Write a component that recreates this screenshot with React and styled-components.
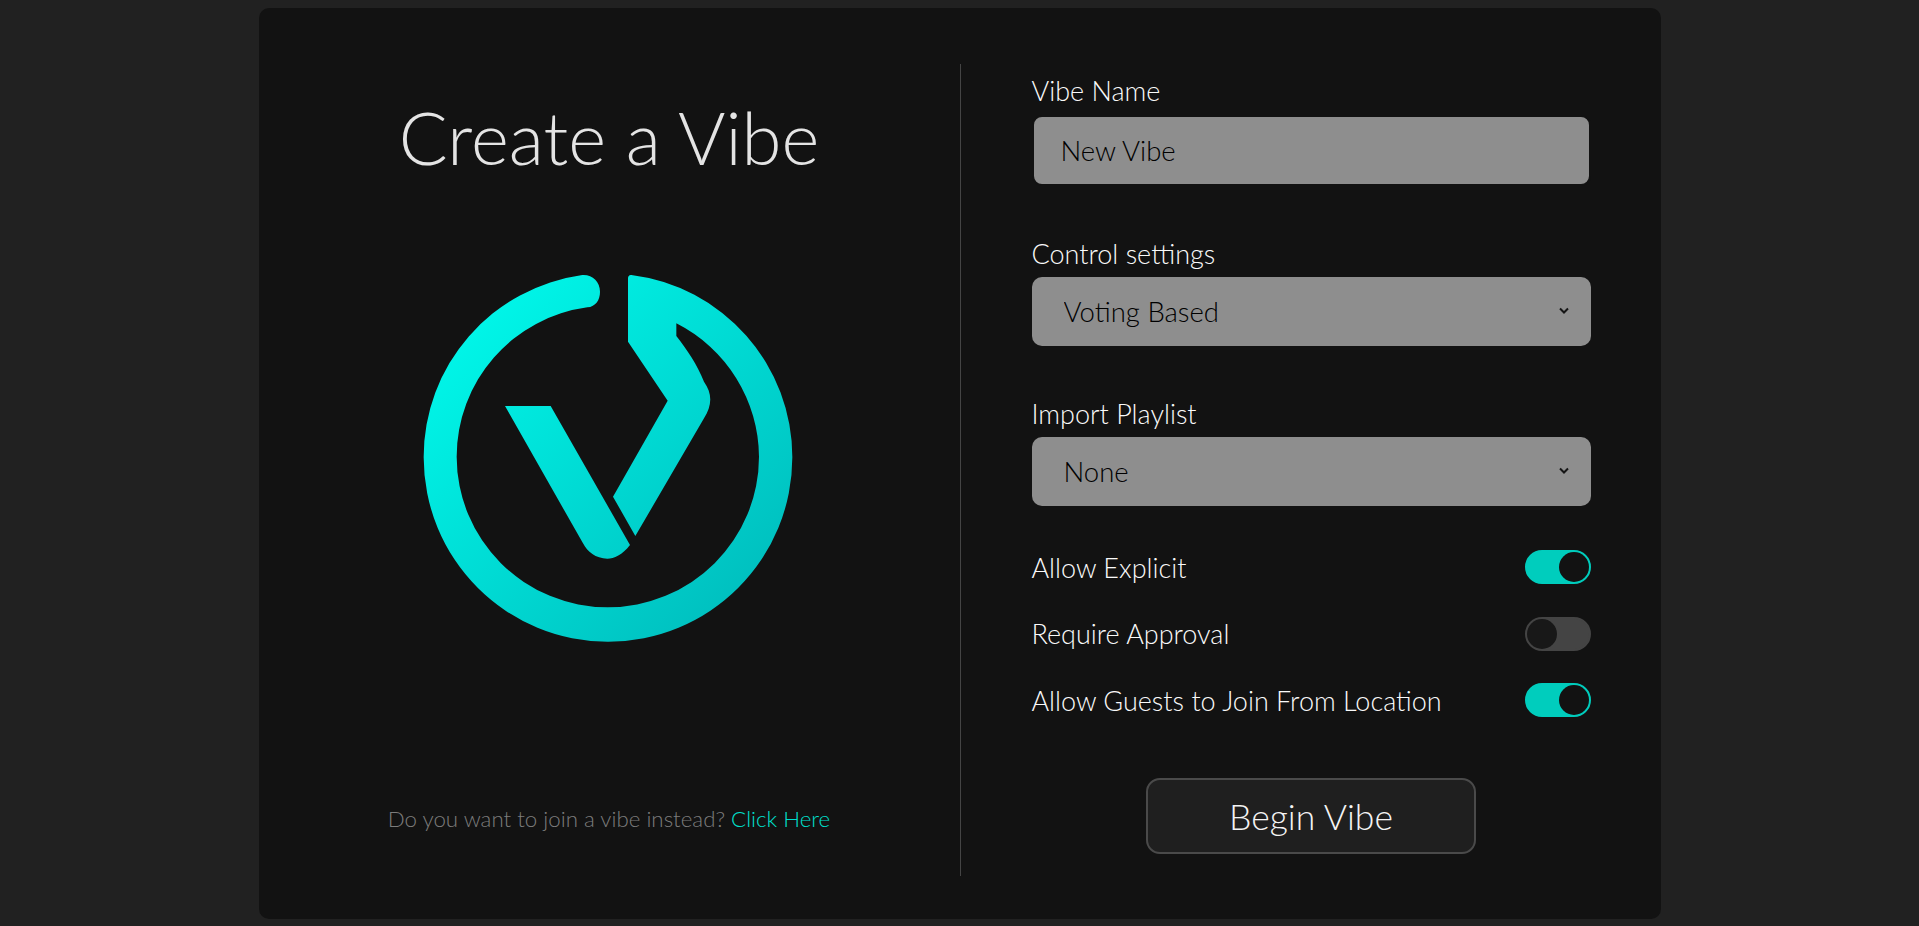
import React, { useState } from "react";
import styled, { createGlobalStyle } from "styled-components";

const GlobalStyle = createGlobalStyle`
  html, body {
    margin: 0;
    height: 100%;
    background: #212121;
  }
  body {
    font-family: "Lato", "Open Sans", sans-serif;
    color: #e6e6e6;
    overflow: hidden;
  }
  * {
    box-sizing: border-box;
  }
`;

const Page = styled.div`
  display: flex;
  justify-content: center;
  padding-top: 8px;
`;

const Card = styled.div`
  display: grid;
  grid-template-columns: 701px 1px 1fr;
  width: 1402px;
  height: 911px;
  padding: 56px 0 43px;
  background: #121212;
  border-radius: 10px;
`;

const LeftColumn = styled.div`
  display: flex;
  flex-direction: column;
  align-items: center;
`;

const Title = styled.h1`
  margin: 28px 0 0;
  font-size: 72.5px;
  line-height: 90px;
  font-weight: 300;
  color: #e4e4e4;
`;

const Logo = styled.svg`
  display: block;
  width: 420px;
  height: 400px;
  margin-top: 68px;
`;

const SwitchLine = styled.p`
  margin: 154px 0 0;
  font-size: 22.3px;
  line-height: 30px;
  font-weight: 300;
  color: #7c7c7c;
`;

const SwitchLink = styled.a`
  color: #00e0cf;
  font-weight: 300;
  text-decoration: none;
  cursor: pointer;
`;

const Divider = styled.div`
  background: #444;
`;

const RightColumn = styled.form`
  display: flex;
  flex-direction: column;
  padding: 11px 70px 0 71px;
`;

const Group = styled.div`
  display: flex;
  flex-direction: column;
  margin-bottom: ${(p) => p.$after}px;
`;

const Label = styled.label`
  font-size: 27px;
  line-height: 32px;
  font-weight: 300;
  color: #fafafa;
  margin-bottom: ${(p) => p.$gap}px;
`;

const TextField = styled.input`
  height: 71px;
  width: 100%;
  margin-top: 2px;
  padding: 0 27px;
  background: #8e8e8e;
  border: 2px solid #121212;
  border-radius: 10px;
  outline: none;
  font-family: inherit;
  font-size: 27.5px;
  font-weight: 300;
  color: #000;
`;

const SelectWrap = styled.div`
  position: relative;
  height: 69px;
`;

const SelectField = styled.select`
  appearance: none;
  display: block;
  height: 100%;
  width: 100%;
  padding: 0 50px 0 32px;
  background: #8e8e8e;
  border: none;
  border-radius: 10px;
  outline: none;
  font-family: inherit;
  font-size: 27.5px;
  font-weight: 300;
  color: #000;
`;

const Chevron = styled.svg`
  position: absolute;
  top: 30px;
  right: 22px;
  width: 10px;
  height: 8px;
  pointer-events: none;
`;

const ToggleList = styled.div`
  display: flex;
  flex-direction: column;
  gap: 32.5px;
`;

const ToggleRow = styled.div`
  display: flex;
  align-items: center;
  justify-content: space-between;
  height: 34px;
  font-size: 27px;
  font-weight: 300;
  color: #fafafa;
`;

const Track = styled.button`
  position: relative;
  width: 66px;
  height: 34px;
  padding: 0;
  border: 2px solid ${(p) => (p.$on ? "#00cdbd" : "#444")};
  border-radius: 17px;
  background: ${(p) => (p.$on ? "#00cdbd" : "#444")};
  cursor: pointer;
`;

const Knob = styled.span`
  position: absolute;
  top: 0;
  left: ${(p) => (p.$on ? "32px" : "0")};
  width: 30px;
  height: 30px;
  border-radius: 50%;
  background: ${(p) => (p.$on ? "#121212" : "#181818")};
`;

const BeginButton = styled.button`
  align-self: center;
  width: 330px;
  height: 76px;
  margin-top: 61px;
  background: #1f1f1f;
  border: 2px solid #4a4a4a;
  border-radius: 14px;
  font-family: inherit;
  font-size: 35.5px;
  font-weight: 300;
  color: #f4f4f4;
  cursor: pointer;
`;

function Toggle({ label, initial }) {
  const [on, setOn] = useState(initial);
  return (
    <ToggleRow>
      <span>{label}</span>
      <Track type="button" $on={on} onClick={() => setOn(!on)}>
        <Knob $on={on} />
      </Track>
    </ToggleRow>
  );
}

function Select({ options }) {
  return (
    <SelectWrap>
      <SelectField defaultValue={options[0]}>
        {options.map((option) => (
          <option key={option}>{option}</option>
        ))}
      </SelectField>
      <Chevron viewBox="0 0 10 8">
        <path d="M1 1.5 L5 5.5 L9 1.5" fill="none" stroke="#151515" strokeWidth="2" />
      </Chevron>
    </SelectWrap>
  );
}

function VibeLogo() {
  return (
    <Logo viewBox="0 0 1260 1200">
      <defs>
        <linearGradient id="vibeGrad" gradientUnits="userSpaceOnUse" x1="180" y1="180" x2="1080" y2="1080">
          <stop offset="0" stopColor="#00f8ea" />
          <stop offset="1" stopColor="#00bdbd" />
        </linearGradient>
      </defs>
      <path
        fill="url(#vibeGrad)"
        d="M550 75 A551 551 0 0 0 74 622 A552 553 0 0 0 627 1175 A552 553 0 0 0 1180 622 A551 551 0 0 0 697 75 C691 74 687 78 687 85 L687 275 L806 452 L642 740 L709 858 L915 505 C940 465 940 430 915 395 C895 345 865 300 832 258 L832 220 A452 452 0 0 1 1080 620 A454 452 0 0 1 626 1072 A453 452 0 0 1 173 620 A452 452 0 0 1 565 172 C590 170 603 150 603 125 C603 95 580 73 550 75 Z"
      />
      <path
        fill="url(#vibeGrad)"
        d="M318 468 L455 468 L693 885 C670 915 645 926 625 926 C590 926 565 905 552 880 Z"
      />
    </Logo>
  );
}

function App() {
  return (
    <Page>
      <GlobalStyle />
      <Card>
        <LeftColumn>
          <Title>Create a Vibe</Title>
          <VibeLogo />
          <SwitchLine>
            Do you want to join a vibe instead? <SwitchLink>Click Here</SwitchLink>
          </SwitchLine>
        </LeftColumn>
        <Divider />
        <RightColumn>
          <Group $after={52}>
            <Label $gap={6}>Vibe Name</Label>
            <TextField defaultValue="New Vibe" />
          </Group>
          <Group $after={52}>
            <Label $gap={7}>Control settings</Label>
            <Select options={["Voting Based", "Host Only"]} />
          </Group>
          <Group $after={44}>
            <Label $gap={7}>Import Playlist</Label>
            <Select options={["None"]} />
          </Group>
          <ToggleList>
            <Toggle label="Allow Explicit" initial={true} />
            <Toggle label="Require Approval" initial={false} />
            <Toggle label="Allow Guests to Join From Location" initial={true} />
          </ToggleList>
          <BeginButton type="button">Begin Vibe</BeginButton>
        </RightColumn>
      </Card>
    </Page>
  );
}

export default App;
